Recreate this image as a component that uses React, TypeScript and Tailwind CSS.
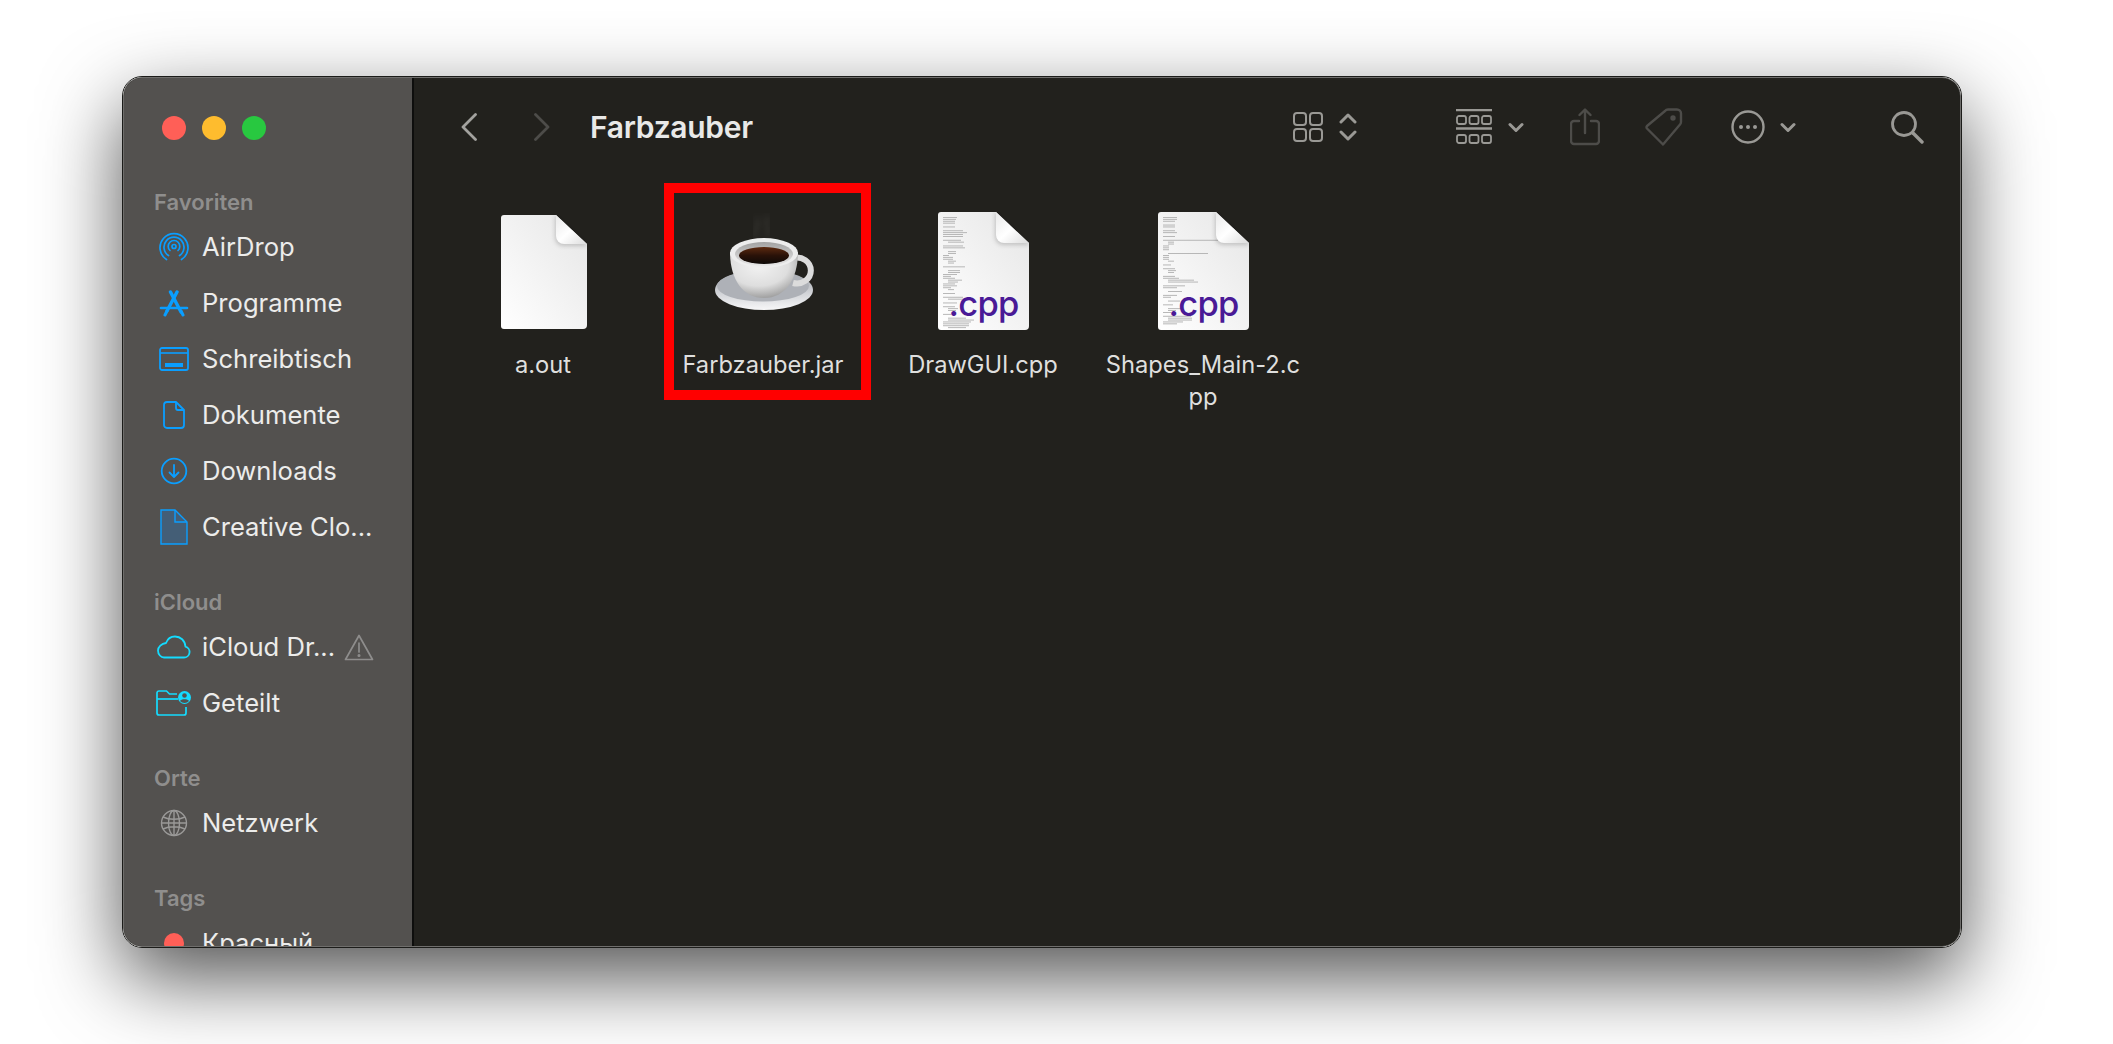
import React from 'react';

const blue = '#0a9eff';
const cyan = '#14dcff';

const AirDropIcon = () => (
  <svg width="30" height="30" viewBox="0 0 30 30" fill="none" stroke={blue} strokeWidth="1.7" strokeLinecap="round">
    <path d="M7.5 27.5A14 14 0 1 1 22.5 27.5" />
    <path d="M9.5 23.5A10 10 0 1 1 20.5 23.5" />
    <path d="M11 18.5A5.8 5.8 0 1 1 19 18.5" />
    <circle cx="15" cy="14.5" r="2" />
  </svg>
);

const AppsIcon = () => (
  <svg width="30" height="27" viewBox="0 0 30 27" fill="none" stroke={blue} strokeLinecap="round">
    <path d="M11.500 2L22 22" strokeWidth="3.4" />
    <path d="M18 2L8 21" strokeWidth="3.4" />
    <path d="M2 18h26" strokeWidth="2.6" />
    <path d="M6 25l2-4M24 25l-2-4" strokeWidth="3" />
  </svg>
);

const DesktopIcon = () => (
  <svg width="30" height="24" viewBox="0 0 30 24" fill="none">
    <rect x="1" y="1" width="28" height="22" rx="2" stroke={blue} strokeWidth="1.8" />
    <path d="M1 6h28" stroke={blue} strokeWidth="1.6" />
    <rect x="6" y="16" width="18" height="4" fill={blue} />
  </svg>
);

const DocOutlineIcon = () => (
  <svg width="22" height="28" viewBox="0 0 22 28" fill="none" stroke={blue} strokeWidth="1.8" strokeLinejoin="round">
    <path d="M4 1h9l8 8v15a3 3 0 0 1-3 3H4a3 3 0 0 1-3-3V4a3 3 0 0 1 3-3z" />
    <path d="M13 1v6a2 2 0 0 0 2 2h6" />
  </svg>
);

const DownloadIcon = () => (
  <svg width="28" height="28" viewBox="0 0 28 28" fill="none" stroke={blue} strokeWidth="1.8" strokeLinecap="round" strokeLinejoin="round">
    <circle cx="14" cy="14" r="12.3" />
    <path d="M14 8v12M9.5 15.5L14 20l4.500-4.500" />
  </svg>
);

const CloudDocIcon = () => (
  <svg width="28" height="36" viewBox="0 0 28 36" fill="#445e76" stroke={blue} strokeWidth="1.4">
    <path d="M1 1h14l12 12v22H1z" />
    <path d="M15 1v12h12" fill="none" />
  </svg>
);

const CloudIcon = () => (
  <svg width="34" height="24" viewBox="0 0 34 24" fill="none" stroke={cyan} strokeWidth="1.8" strokeLinejoin="round">
    <path d="M7 22.500h20a5.500 5.500 0 0 0 1.500-10.800C28 5.500 23.500 1.500 18 1.500c-4.500 0-7.500 2.500-9 6.500C4.500 8.500 1 12 1 15.500c0 4 3 7 6 7z" />
  </svg>
);

const SharedFolderIcon = () => (
  <svg width="36" height="26" viewBox="0 0 36 26" fill="none">
    <path d="M30 17v6a2 2 0 0 1-2 2H3a2 2 0 0 1-2-2V3a2 2 0 0 1 2-2h7.500l3 3H21" stroke={cyan} strokeWidth="1.700" />
    <path d="M1 9h21" stroke={cyan} strokeWidth="1.700" />
    <circle cx="28.500" cy="7.500" r="6.500" fill={cyan} />
    <circle cx="28.500" cy="5.500" r="2.300" fill="#53514f" />
    <path d="M24 11c1-2.200 8-2.200 9 0a6 6 0 0 1-9 0z" fill="#53514f" />
  </svg>
);

const GlobeIcon = () => (
  <svg width="28" height="28" viewBox="0 0 28 28" fill="none" stroke="#9a9998" strokeWidth="1.400">
    <circle cx="14" cy="14" r="12.500" />
    <ellipse cx="14" cy="14" rx="5.500" ry="12.500" />
    <path d="M3 8c6 3 16 3 22 0M3 20c6-3 16-3 22 0M1.500 14h25M14 1.500v25" />
  </svg>
);

const WarningIcon = () => (
  <svg width="30" height="27" viewBox="0 0 30 27" fill="none" stroke="#8e8d8c" strokeWidth="1.700" strokeLinejoin="round">
    <path d="M15 1.500L28.500 25.500H1.500z" />
    <path d="M15 9v9" strokeLinecap="round" />
    <circle cx="15" cy="21.500" r="0.700" />
  </svg>
);

const SidebarRow = ({ icon, label, extra }: { icon: React.ReactNode, label: string, extra?: React.ReactNode }) => (
  <div className="flex items-center h-[56px] shrink-0">
    <div className="w-[40px] flex items-center justify-center shrink-0">{icon}</div>
    <span className="ml-[8px] text-[25.6px] text-[#ececeb] whitespace-nowrap">{label}</span>
    {extra}
  </div>
);

const SidebarHeader = ({ label, first }: { label: string, first?: boolean }) => (
  <div className={`h-[34px] shrink-0 flex items-center text-[22px] font-semibold text-[#8f8e8d] ${first ? '' : 'mt-[30px]'}`}>
    {label}
  </div>
);

const Sidebar = () => (
  <div className="w-[290px] shrink-0 h-full bg-[#53514f] border-r-2 border-[#0e0e0d] overflow-hidden">
    <div className="flex items-start gap-[16px] pl-[38px] pt-[38px] h-[107px]">
      <span className="w-[24px] h-[24px] rounded-full bg-[#ff5f57]" />
      <span className="w-[24px] h-[24px] rounded-full bg-[#febc2e]" />
      <span className="w-[24px] h-[24px] rounded-full bg-[#28c840]" />
    </div>
    <div className="flex flex-col pl-[30px]">
      <SidebarHeader label="Favoriten" first />
      <SidebarRow icon={<AirDropIcon />} label="AirDrop" />
      <SidebarRow icon={<AppsIcon />} label="Programme" />
      <SidebarRow icon={<DesktopIcon />} label="Schreibtisch" />
      <SidebarRow icon={<DocOutlineIcon />} label="Dokumente" />
      <SidebarRow icon={<DownloadIcon />} label="Downloads" />
      <SidebarRow icon={<CloudDocIcon />} label="Creative Clo..." />
      <SidebarHeader label="iCloud" />
      <SidebarRow
        icon={<CloudIcon />}
        label="iCloud Dr..."
        extra={<span className="ml-[9px] flex"><WarningIcon /></span>}
      />
      <SidebarRow icon={<SharedFolderIcon />} label="Geteilt" />
      <SidebarHeader label="Orte" />
      <SidebarRow icon={<GlobeIcon />} label="Netzwerk" />
      <SidebarHeader label="Tags" />
      <SidebarRow
        icon={<span className="block w-[20px] h-[20px] rounded-full bg-[#ff5f57]" />}
        label="Красный"
      />
    </div>
  </div>
);

const toolStroke = '#9a9995';
const toolDim = '#4d4c49';

const Toolbar = () => (
  <div className="h-[98px] flex items-center pl-[47px] shrink-0">
    <svg width="16" height="28" viewBox="0 0 16 28" fill="none" stroke="#a3a29f" strokeWidth="2.800" strokeLinecap="round" strokeLinejoin="round">
      <path d="M14.500 1.500L2 14l12.500 12.500" />
    </svg>
    <svg className="ml-[57px]" width="16" height="28" viewBox="0 0 16 28" fill="none" stroke={toolDim} strokeWidth="2.800" strokeLinecap="round" strokeLinejoin="round">
      <path d="M1.500 1.500L14 14 1.500 26.500" />
    </svg>
    <div className="ml-[40px] w-[301px] text-[30px] leading-none font-semibold text-[#e9e9e8] tracking-[-0.3px]">Farbzauber</div>

    <svg className="ml-[402px]" width="30" height="30" viewBox="0 0 30 30" fill="none" stroke={toolStroke} strokeWidth="2">
      <rect x="1" y="1" width="12" height="12" rx="3" />
      <rect x="17" y="1" width="12" height="12" rx="3" />
      <rect x="1" y="17" width="12" height="12" rx="3" />
      <rect x="17" y="17" width="12" height="12" rx="3" />
    </svg>
    <svg className="ml-[16px]" width="18" height="30" viewBox="0 0 18 30" fill="none" stroke={toolStroke} strokeWidth="3" strokeLinecap="round" strokeLinejoin="round">
      <path d="M2 10l7-7 7 7M2 20l7 7 7-7" />
    </svg>

    <svg className="ml-[99px]" width="36" height="36" viewBox="0 0 36 36" fill="none" stroke={toolStroke} strokeWidth="1.800">
      <path d="M0 1h36M0 19.500h36" strokeWidth="2.400" />
      <rect x="1" y="7" width="9" height="8" rx="2" />
      <rect x="13.500" y="7" width="9" height="8" rx="2" />
      <rect x="26" y="7" width="9" height="8" rx="2" />
      <rect x="1" y="26" width="9" height="8" rx="2" />
      <rect x="13.500" y="26" width="9" height="8" rx="2" />
      <rect x="26" y="26" width="9" height="8" rx="2" />
    </svg>
    <svg className="ml-[16px]" width="16" height="11" viewBox="0 0 16 11" fill="none" stroke={toolStroke} strokeWidth="3" strokeLinecap="round" strokeLinejoin="round">
      <path d="M2 2.500l6 6 6-6" />
    </svg>

    <svg className="ml-[46px]" width="30" height="38" viewBox="0 0 30 38" fill="none" stroke={toolDim} strokeWidth="2.400" strokeLinecap="round" strokeLinejoin="round">
      <path d="M9 13H4a3 3 0 0 0-3 3v17a3 3 0 0 0 3 3h22a3 3 0 0 0 3-3V16a3 3 0 0 0-3-3h-5" />
      <path d="M15 25V2M9.500 7L15 1.500 20.500 7" />
    </svg>

    <svg className="ml-[45px]" width="38" height="38" viewBox="0 0 38 38" fill="none" stroke={toolDim} strokeWidth="2.400" strokeLinejoin="round">
      <path d="M23 1.500h9a4 4 0 0 1 4 4V14a4 4 0 0 1-1 2.500L18 36.500 2 20.500a2 2 0 0 1 0-2.500L20 3a4 4 0 0 1 3-1.500z" />
      <circle cx="28" cy="10" r="1.500" fill={toolDim} />
    </svg>

    <svg className="ml-[48px]" width="34" height="34" viewBox="0 0 34 34" fill="none" stroke={toolStroke} strokeWidth="2.400">
      <circle cx="17" cy="17" r="15.500" />
      <circle cx="10" cy="17" r="2" fill={toolStroke} stroke="none" />
      <circle cx="17" cy="17" r="2" fill={toolStroke} stroke="none" />
      <circle cx="24" cy="17" r="2" fill={toolStroke} stroke="none" />
    </svg>
    <svg className="ml-[15px]" width="16" height="11" viewBox="0 0 16 11" fill="none" stroke={toolStroke} strokeWidth="3" strokeLinecap="round" strokeLinejoin="round">
      <path d="M2 2.500l6 6 6-6" />
    </svg>

    <svg className="ml-[94px]" width="34" height="34" viewBox="0 0 34 34" fill="none" stroke={toolStroke} strokeWidth="2.800" strokeLinecap="round">
      <circle cx="14" cy="14" r="11.500" />
      <path d="M23 23l9 9" strokeWidth="3.400" />
    </svg>
  </div>
);

const PaperSheet = ({ id, width, height, children }: { id: string, width: number, height: number, children?: React.ReactNode }) => {
  const fold = Math.round(width * 0.36);
  const right = width;
  const left = right - fold;
  return (
    <svg width={width} height={height} viewBox={`0 0 ${width} ${height}`}>
      <defs>
        <linearGradient id={`${id}-page`} x1="1" y1="0" x2="0" y2="1">
          <stop offset="0" stopColor="#e6e6e6" />
          <stop offset="1" stopColor="#ffffff" />
        </linearGradient>
        <linearGradient id={`${id}-fold`} x1="0" y1="0" x2="1" y2="1">
          <stop offset="0" stopColor="#e9e9e9" />
          <stop offset="0.5" stopColor="#ffffff" />
          <stop offset="1" stopColor="#dcdcdc" />
        </linearGradient>
        <filter id={`${id}-blur`}><feGaussianBlur stdDeviation="2" /></filter>
      </defs>
      <path
        d={`M3 0H${left}L${right} ${fold - 2}V${height - 4}a4 4 0 0 1-4 4H3a3 3 0 0 1-3-3V3a3 3 0 0 1 3-3z`}
        fill={`url(#${id}-page)`}
      />
      {children}
      <path
        d={`M${left - 1} 0V${fold - 8}a8 8 0 0 0 8 8H${right}V${fold - 2}L${left} 0z`}
        fill="#000000"
        fillOpacity="0.18"
        filter={`url(#${id}-blur)`}
      />
      <path
        d={`M${left} 0V${fold - 10}a8 8 0 0 0 8 8H${right}z`}
        fill={`url(#${id}-fold)`}
      />
    </svg>
  );
};

const codeLines = (id: number) => {
  const widths = id === 0
    ? [14, 13, 12, 12, 0, 12, 0, 20, 24, 20, 20, 0, 18, 16, 0, 20, 22, 0, 8, 8, 6, 10, 10, 8, 6, 0, 22, 0, 12, 12, 14, 8, 12, 14, 10, 12, 14, 8, 6, 0, 12, 0, 20, 18, 0, 14, 0, 12, 10, 8, 0, 8, 0, 18, 26, 28, 26, 26, 18]
    : [14, 14, 12, 0, 12, 12, 0, 12, 14, 0, 12, 0, 66, 6, 6, 6, 6, 6, 0, 40, 6, 6, 6, 6, 0, 8, 0, 12, 8, 6, 0, 12, 16, 26, 30, 0, 22, 14, 0, 14, 0, 14, 8, 0, 12, 0, 10, 0, 14, 8, 8, 0, 28, 24, 24, 20, 14];
  return widths;
};

const CppDoc = ({ id }: { id: number }) => (
  <div className="relative w-[91px] h-[118px]">
    <PaperSheet id={`cpp-${id}`} width={91} height={118}>
      {codeLines(id).map((w, i) => (
        w > 0 ? (
          <rect
            key={i}
            x={i % 5 > 2 && i > 12 ? 10 : 5}
            y={5 + i * 1.9}
            width={w}
            height="0.9"
            fill="#b0b0b0"
          />
        ) : null
      ))}
    </PaperSheet>
    <span className="absolute left-[11px] bottom-[9px] text-[34.5px] leading-none font-medium text-[#4a1a96] tracking-[-0.7px]">.cpp</span>
  </div>
);

const CoffeeCup = () => (
  <svg className="mb-[22px] ml-[4px]" width="150" height="120" viewBox="0 0 150 120">
    <defs>
      <linearGradient id="saucer" x1="0" y1="0" x2="0" y2="1">
        <stop offset="0" stopColor="#9a9da3" />
        <stop offset="0.55" stopColor="#cfd1d5" />
        <stop offset="1" stopColor="#f7f7f8" />
      </linearGradient>
      <radialGradient id="cup" cx="0.42" cy="0.3" r="0.8">
        <stop offset="0" stopColor="#f2f2f2" />
        <stop offset="0.55" stopColor="#dedede" />
        <stop offset="1" stopColor="#8a8a8a" />
      </radialGradient>
      <linearGradient id="rimInner" x1="0" y1="0" x2="0" y2="1">
        <stop offset="0" stopColor="#a2a2a2" />
        <stop offset="1" stopColor="#e8e8e8" />
      </linearGradient>
      <linearGradient id="coffee" x1="0" y1="0" x2="0" y2="1">
        <stop offset="0" stopColor="#5d2a10" />
        <stop offset="0.5" stopColor="#2a1208" />
        <stop offset="1" stopColor="#0e0a08" />
      </linearGradient>
      <filter id="steam"><feGaussianBlur stdDeviation="3" /></filter>
    </defs>
    <path d="M66 38c-4-7 4-10 1-20M77 38c4-8-3-12 1-22" fill="none" stroke="#ffffff" strokeOpacity="0.08" strokeWidth="4" filter="url(#steam)" />
    <ellipse cx="74" cy="90" rx="49" ry="20" fill="url(#saucer)" />
    <ellipse cx="73" cy="86" rx="46" ry="15.500" fill="#aeb1b7" />
    <path d="M103 58a14 13 0 1 1 0 25" fill="none" stroke="#dcdcdc" strokeWidth="6" />
    <path d="M40 52C40 78 52 98 74 98S108 78 108 52z" fill="url(#cup)" />
    <ellipse cx="74" cy="53" rx="34" ry="15" fill="#ededed" />
    <ellipse cx="74" cy="54" rx="29" ry="12" fill="url(#rimInner)" />
    <ellipse cx="74" cy="55.500" rx="25" ry="8.500" fill="url(#coffee)" />
  </svg>
);

const FileItem = ({ icon, lines, highlighted }: { icon: React.ReactNode, lines: string[], highlighted?: boolean }) => (
  <div className="relative w-[220px] flex flex-col items-center">
    <div className="h-[128px] w-full flex items-center justify-center">{icon}</div>
    <div className="mt-[14px] text-center text-[23.7px] leading-[32px] text-[#dfdfde] whitespace-nowrap">
      {lines.map((line) => <div key={line}>{line}</div>)}
    </div>
    {highlighted && (
      <span className="absolute left-[11px] top-[-24px] w-[207px] h-[217px] border-[10px] border-[#ff0000]" />
    )}
  </div>
);

const App = () => (
  <div className="w-full h-[1044px] bg-white overflow-hidden pl-[122px] pt-[76px] font-['Inter',sans-serif]">
    <div className="w-[1840px] h-[872px] rounded-[20px] border border-[#1c1c1a] shadow-[0_30px_80px_rgba(0,0,0,0.68)] overflow-hidden">
      <div className="w-full h-full flex rounded-[19px] border border-[#6f6e6c] overflow-hidden bg-[#22211d]">
        <Sidebar />
        <div className="flex-1 min-w-0 flex flex-col">
          <Toolbar />
          <div className="flex pl-[19px] pt-[31px]">
            <FileItem
              lines={['a.out']}
              icon={<div className="w-[86px] h-[114px] flex mt-[2px] ml-[2px]"><PaperSheet id="aout" width={86} height={114} /></div>}
            />
            <FileItem lines={['Farbzauber.jar']} icon={<CoffeeCup />} highlighted />
            <FileItem lines={['DrawGUI.cpp']} icon={<CppDoc id={0} />} />
            <FileItem lines={['Shapes_Main-2.c', 'pp']} icon={<CppDoc id={1} />} />
          </div>
        </div>
      </div>
    </div>
  </div>
);

export default App;
